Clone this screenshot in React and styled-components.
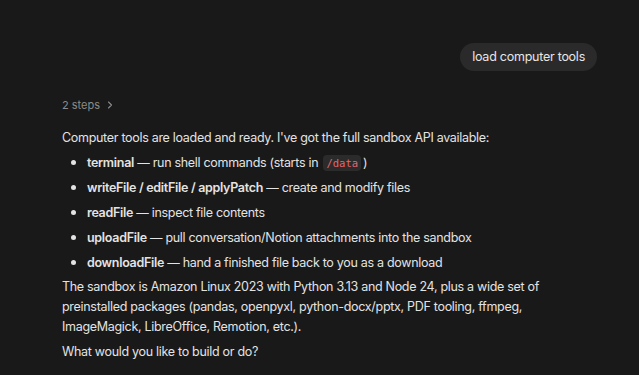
import React from 'react';
import styled, { createGlobalStyle } from 'styled-components';

const GlobalStyle = createGlobalStyle`
  html, body {
    margin: 0;
    background: #191919;
  }
  body {
    font-family: Inter, "Noto Sans", sans-serif;
    color: #e3e3e3;
    letter-spacing: -0.3px;
  }
`;

const Page = styled.div`
  width: 639px;
  height: 375px;
  box-sizing: border-box;
  padding: 43px 42px 0 62px;
  overflow: hidden;
`;

const UserRow = styled.div`
  display: flex;
  justify-content: flex-end;
`;

const Bubble = styled.div`
  background: #2a2a2a;
  border-radius: 14px;
  padding: 0 12px;
  height: 28px;
  line-height: 28px;
  font-size: 12.5px;
  letter-spacing: -0.25px;
  color: #e6e6e6;
`;

const Steps = styled.div`
  margin-top: 27px;
  display: flex;
  align-items: center;
  gap: 6px;
  font-size: 11px;
  letter-spacing: 0;
  color: #8b8b8b;
`;

const Para = styled.p`
  margin: ${p => p.$top || 0}px 0 0;
  font-size: 12.5px;
  line-height: 20px;
`;

const List = styled.ul`
  margin: 2px 0 0;
  padding: 0 0 0 25px;
  list-style: none;
`;

const Item = styled.li`
  position: relative;
  font-size: 12.5px;
  line-height: 20px;
  padding: 2.5px 0;

  &::before {
    content: '';
    position: absolute;
    left: -16px;
    top: 10px;
    width: 5px;
    height: 5px;
    border-radius: 50%;
    background: #e3e3e3;
  }
`;

const Bold = styled.strong`
  font-weight: 600;
`;

const Code = styled.code`
  font-family: "DejaVu Sans Mono", "Liberation Mono", monospace;
  font-size: 10.5px;
  letter-spacing: 0;
  color: #e5656b;
  background: #2b2b2b;
  border-radius: 4px;
  padding: 2px 3px;
  margin: 0 2px;
`;

const Chevron = () => (
  <svg width="8" height="8" viewBox="0 0 8 8" fill="none">
    <path d="M2.5 1 L5.5 4 L2.5 7" stroke="#8b8b8b" strokeWidth="1.1" strokeLinecap="round" strokeLinejoin="round" />
  </svg>
);

const tools = [
  { name: 'terminal', desc: <>run shell commands (starts in <Code>/data</Code>)</> },
  { name: 'writeFile / editFile / applyPatch', desc: 'create and modify files' },
  { name: 'readFile', desc: 'inspect file contents' },
  { name: 'uploadFile', desc: 'pull conversation/Notion attachments into the sandbox' },
  { name: 'downloadFile', desc: 'hand a finished file back to you as a download' },
];

const App = () => (
  <>
    <GlobalStyle />
    <Page>
      <UserRow>
        <Bubble>load computer tools</Bubble>
      </UserRow>
      <Steps>
        2 steps <Chevron />
      </Steps>
      <Para $top={16}>
        Computer tools are loaded and ready. I've got the full sandbox API available:
      </Para>
      <List>
        {tools.map(t => (
          <Item key={t.name}>
            <Bold>{t.name}</Bold> — {t.desc}
          </Item>
        ))}
      </List>
      <Para $top={2}>
        The sandbox is Amazon Linux 2023 with Python 3.13 and Node 24, plus a wide set of
        preinstalled packages (pandas, openpyxl, python-docx/pptx, PDF tooling, ffmpeg,
        ImageMagick, LibreOffice, Remotion, etc.).
      </Para>
      <Para $top={5}>What would you like to build or do?</Para>
    </Page>
  </>
);

export default App;
